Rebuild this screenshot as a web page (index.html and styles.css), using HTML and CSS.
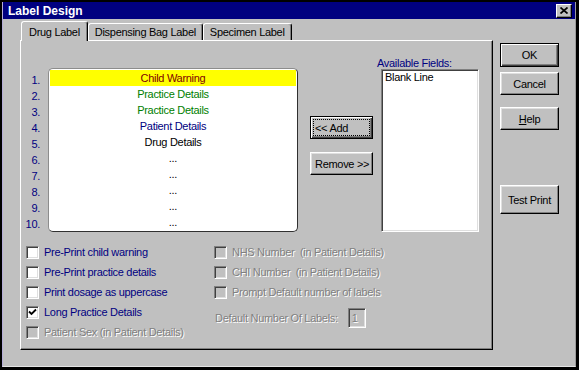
FILE: index.html
```html
<!DOCTYPE html>
<html lang="en">
<head>
    <meta charset="UTF-8">
    <title>Label Design</title>
    <link rel="stylesheet" href="styles.css">
</head>
<body>
    <div class="window">
        <div class="frame">
            <!-- Title Bar -->
            <header class="titlebar">
                <span class="title">Label Design</span>
                <button class="close-btn" aria-label="Close">
                    <svg width="8" height="7" viewBox="0 0 8 7">
                        <path d="M0.5 0.5 L7.5 6.5 M7.5 0.5 L0.5 6.5" stroke="#000" stroke-width="1.7" fill="none"/>
                    </svg>
                </button>
            </header>

            <div class="dialog">
                <!-- Tabs and Panel -->
                <div class="tabs-area">
                    <nav class="tabs">
                        <div class="tab active">Drug Label</div>
                        <div class="tab">Dispensing Bag Label</div>
                        <div class="tab">Specimen Label</div>
                    </nav>

                    <div class="panel">
                        <div class="panel-top">
                            <ol class="numbers">
                                <li>1.</li><li>2.</li><li>3.</li><li>4.</li><li>5.</li>
                                <li>6.</li><li>7.</li><li>8.</li><li>9.</li><li>10.</li>
                            </ol>

                            <ul class="label-list">
                                <li class="row-warning">Child Warning</li>
                                <li class="row-practice">Practice Details</li>
                                <li class="row-practice">Practice Details</li>
                                <li class="row-patient">Patient Details</li>
                                <li>Drug Details</li>
                                <li>...</li>
                                <li>...</li>
                                <li>...</li>
                                <li>...</li>
                                <li>...</li>
                            </ul>

                            <div class="move-buttons">
                                <button class="btn btn-left focused">&lt;&lt; Add</button>
                                <button class="btn btn-left">Remove &gt;&gt;</button>
                            </div>

                            <div class="available">
                                <div class="available-label">Available Fields:</div>
                                <ul class="field-list">
                                    <li>Blank Line</li>
                                </ul>
                            </div>
                        </div>

                        <!-- Options -->
                        <div class="options">
                            <div class="option-col first">
                                <label class="check"><span class="box"></span>Pre-Print child warning</label>
                                <label class="check"><span class="box"></span>Pre-Print practice details</label>
                                <label class="check"><span class="box"></span>Print dosage as uppercase</label>
                                <label class="check">
                                    <span class="box">
                                        <svg width="9" height="9" viewBox="0 0 9 9">
                                            <path d="M1 3.5 L3.5 6 L8 1.5" stroke="#000" stroke-width="1.8" fill="none"/>
                                        </svg>
                                    </span>Long Practice Details
                                </label>
                                <label class="check disabled"><span class="box"></span>Patient Sex (in Patient Details)</label>
                            </div>
                            <div class="option-col">
                                <label class="check disabled"><span class="box"></span>NHS Number&nbsp; (in Patient Details)</label>
                                <label class="check disabled"><span class="box"></span>CHI Number&nbsp; (in Patient Details)</label>
                                <label class="check disabled"><span class="box"></span>Prompt Default number of labels</label>
                                <div class="labels-count">
                                    <span class="disabled-text">Default Number Of Labels:</span>
                                    <span class="count-box">1</span>
                                </div>
                            </div>
                        </div>
                    </div>
                </div>

                <!-- Dialog Buttons -->
                <div class="actions">
                    <button class="btn default">OK</button>
                    <button class="btn cancel">Cancel</button>
                    <button class="btn help"><u>H</u>elp</button>
                    <button class="btn test-print">Test Print</button>
                </div>
            </div>
        </div>
    </div>
</body>
</html>
```

FILE: styles.css
```css
/* ----- Color Variables ----- */
:root {
    --face: #c0c0c0;
    --shadow: #808080;
    --dark: #404040;
    --light: #dfdfdf;
    --navy: #000080;
}

/* ----- Global Reset ----- */
* {
    margin: 0;
    padding: 0;
    box-sizing: border-box;
}

body {
    background: #000;
    font-family: "Liberation Sans", Arial, sans-serif;
    font-size: 11px;
    letter-spacing: -0.3px;
    color: #000;
}

ul, ol {
    list-style: none;
}

/* ----- Window Frame ----- */
.window {
    width: 579px;
    height: 370px;
    border: solid #000;
    border-width: 2px 3px 3px 2px;
}

.frame {
    height: 100%;
    background: var(--face);
    border-left: 1px solid #b4acd8;
    border-right: 1px solid #9c9c9c;
    border-bottom: 1px solid #e4e4e4;
}

/* ----- Title Bar ----- */
.titlebar {
    height: 17px;
    background: var(--navy);
    display: flex;
    align-items: center;
    justify-content: space-between;
    padding: 0 3px 0 5px;
}

.title {
    color: #fff;
    font-weight: bold;
    font-size: 12px;
    letter-spacing: 0;
}

.close-btn {
    width: 16px;
    height: 14px;
    background: var(--face);
    border: 1px solid;
    border-color: #fff #000 #000 #fff;
    box-shadow: inset -1px -1px 0 var(--shadow);
    display: flex;
    align-items: center;
    justify-content: center;
}

/* ----- Dialog Layout ----- */
.dialog {
    display: flex;
    padding: 2px 0 0 17px;
}

.tabs-area {
    width: 473px;
}

/* ----- Tabs ----- */
.tabs {
    display: flex;
    align-items: flex-end;
    height: 19px;
    padding-left: 1px;
}

.tab {
    height: 17px;
    padding: 0 6px;
    border: 1px solid;
    border-bottom: none;
    border-color: #fff #000 transparent #fff;
    border-radius: 3px 3px 0 0;
    box-shadow: inset -1px 0 0 var(--shadow);
    display: flex;
    align-items: center;
}

.tab.active {
    height: 20px;
    margin-bottom: -1px;
    padding: 0 7px;
    position: relative;
    z-index: 1;
    background: var(--face);
}

/* ----- Panel ----- */
.panel {
    height: 310px;
    border: 1px solid;
    border-color: #fff #000 #000 #fff;
    box-shadow: inset -1px -1px 0 var(--shadow);
}

.panel-top {
    display: flex;
    align-items: flex-start;
    padding-top: 17px;
}

.numbers {
    width: 19px;
    margin: 14px 8px 0 0;
    text-align: right;
    color: var(--navy);
}

.numbers li {
    height: 16px;
    line-height: 16px;
}

.label-list {
    width: 250px;
    height: 164px;
    margin-top: 10px;
    padding: 1px;
    background: #fff;
    border: 1px solid;
    border-color: #8c8c8c #303030 #303030 #8c8c8c;
    border-radius: 5px;
}

.label-list li {
    height: 16px;
    line-height: 16px;
    text-align: center;
}

.row-warning {
    background: #ffff00;
    color: #800000;
}

.row-practice {
    color: #008000;
}

.row-patient {
    color: var(--navy);
}

/* ----- Buttons ----- */
.btn {
    height: 23px;
    background: var(--face);
    border: 1px solid;
    border-color: #fff #000 #000 #fff;
    box-shadow: inset -1px -1px 0 var(--shadow), inset 1px 1px 0 var(--light);
    font: inherit;
    letter-spacing: inherit;
    color: #000;
}

.btn-left {
    text-align: left;
    padding-left: 4px;
}

.btn.focused,
.btn.default {
    border-color: #000;
    box-shadow: inset 1px 1px 0 #fff, inset -1px -1px 0 var(--dark), inset -2px -2px 0 var(--shadow);
}

.btn.focused {
    outline: 1px dotted #000;
    outline-offset: -4px;
}

.move-buttons {
    display: flex;
    flex-direction: column;
    gap: 13px;
    width: 63px;
    margin: 58px 0 0 12px;
}

/* ----- Available Fields ----- */
.available {
    margin-left: 4px;
}

.available-label {
    height: 11px;
    line-height: 11px;
    color: var(--navy);
}

.field-list {
    width: 98px;
    height: 163px;
    margin-left: 4px;
    padding: 0 2px;
    background: #fff;
    border: 1px solid;
    border-color: var(--shadow) #fff #fff var(--shadow);
    box-shadow: inset 1px 1px 0 var(--dark), inset -1px -1px 0 var(--light);
}

.field-list li {
    line-height: 14px;
    padding: 0 1px;
}

/* ----- Options ----- */
.options {
    display: flex;
    margin-top: 10px;
    padding-left: 5px;
}

.option-col {
    display: flex;
    flex-direction: column;
}

.option-col.first {
    width: 188px;
}

.check {
    display: flex;
    align-items: center;
    gap: 5px;
    height: 20px;
    color: var(--navy);
}

.box {
    width: 13px;
    height: 13px;
    flex-shrink: 0;
    padding: 1px;
    background: #fff;
    border: 1px solid;
    border-color: var(--shadow) #fff #fff var(--shadow);
    box-shadow: inset 1px 1px 0 var(--dark), inset -1px -1px 0 var(--light);
}

.box svg {
    display: block;
}

.check.disabled,
.disabled-text {
    color: var(--shadow);
    text-shadow: 1px 1px 0 #fff;
}

.check.disabled .box {
    background: var(--face);
}

.labels-count {
    display: flex;
    align-items: center;
    gap: 10px;
    margin: 6px 0 0 1px;
}

.count-box {
    width: 18px;
    height: 20px;
    padding: 3px 0 0 3px;
    border: 1px solid;
    border-color: var(--shadow) #fff #fff var(--shadow);
    box-shadow: inset 1px 1px 0 var(--dark), inset -1px -1px 0 var(--light);
    color: var(--shadow);
    text-shadow: 1px 1px 0 #fff;
}

/* ----- Dialog Buttons ----- */
.actions {
    display: flex;
    flex-direction: column;
    width: 59px;
    margin: 22px 0 0 7px;
}

.btn.default {
    height: 24px;
}

.btn.cancel {
    margin-top: 5px;
}

.btn.help {
    margin-top: 12px;
}

.btn.test-print {
    height: 29px;
    margin-top: 55px;
}
```
